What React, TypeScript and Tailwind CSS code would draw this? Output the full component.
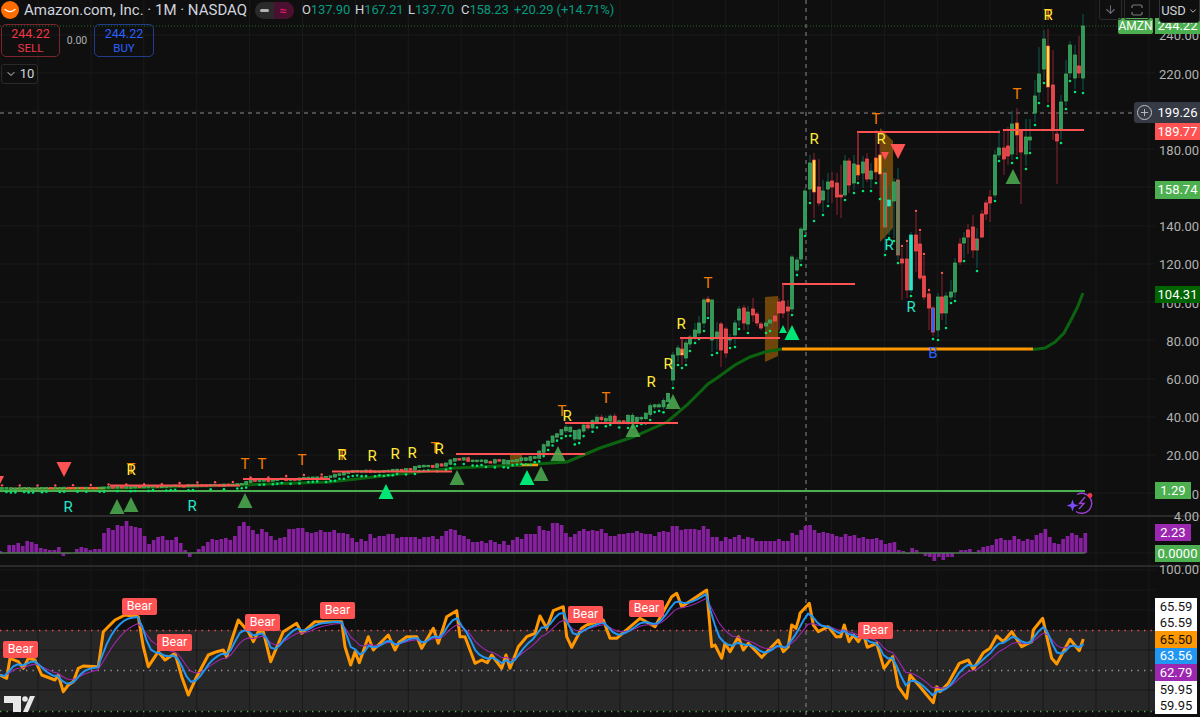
import { ArrowDown, ChevronDown, Plus } from "lucide-react";

type Pt = [number, number];
// x, body top, body bottom, wick high, wick low, kind
type Bar = [number, number, number, number, number, string];

const GRID_X = Array.from({ length: 22 }, (_, i) => 38 + i * 52.9);
const CROSS_X = 806;

const interp = (pts: Pt[], x: number) => {
  if (x <= pts[0][0]) return pts[0][1];
  for (let i = 1; i < pts.length; i++) {
    if (x <= pts[i][0]) {
      const [x0, y0] = pts[i - 1];
      const [x1, y1] = pts[i];
      return y0 + ((y1 - y0) * (x - x0)) / (x1 - x0 || 1);
    }
  }
  return pts[pts.length - 1][1];
};

const toPath = (pts: Pt[]) => pts.map(([x, y], i) => `${i ? "L" : "M"}${x.toFixed(1)} ${y.toFixed(1)}`).join(" ");

// early part of the chart is generated from the price path, the rest is read off per candle
const PRICE_PATH: Pt[] = [
  [0, 488], [110, 487], [240, 484], [250, 480], [330, 477], [345, 471], [400, 469], [440, 465], [452, 458],
  [510, 462], [535, 456], [543, 444], [556, 436], [562, 428], [567, 431], [574, 436], [585, 427], [600, 417],
  [640, 420], [650, 408], [660, 405], [671, 388],
];

const earlyBars = (): Bar[] => {
  let seed = 7;
  const rnd = () => {
    seed = (seed * 16807) % 2147483647;
    return seed / 2147483647;
  };
  const bars: Bar[] = [];
  let prev = 488;
  for (let x = 2; x < 670; x += 4.44) {
    const scale = Math.max(0.5, (495 - interp(PRICE_PATH, x)) / 15);
    const close = interp(PRICE_PATH, x) + (rnd() - 0.5) * scale * 1.5;
    const top = Math.min(prev, close);
    const bot = Math.max(prev, close) + 1.2;
    const kind = close <= prev || rnd() > 0.7 ? "g" : "r";
    bars.push([x, top, bot, top - rnd() * scale * 0.6, bot + rnd() * scale * 0.6, kind]);
    prev = close;
  }
  return bars;
};

const LATE_BARS: Bar[] = [
  [673, 355, 380, 352, 385, "g"], [678, 348, 355, 345, 362, "g"], [682, 349, 355, 338, 365, "y"], [686, 343, 358, 340, 362, "g"],
  [690, 337, 344, 335, 348, "g"], [695, 330, 337, 323, 340, "g"], [699, 323, 333, 316, 336, "g"], [704, 300, 323, 298, 328, "g"],
  [708, 299, 302, 296, 315, "o"], [712, 300, 340, 299, 352, "g"], [717, 332, 338, 322, 350, "g"], [721, 324, 350, 322, 367, "r"],
  [726, 329, 353, 327, 358, "r"], [730, 338, 340, 334, 345, "g"], [735, 323, 335, 320, 344, "g"], [739, 309, 320, 306, 326, "g"],
  [744, 308, 323, 305, 330, "r"], [748, 312, 324, 306, 330, "g"], [753, 309, 315, 298, 322, "r"], [757, 314, 323, 312, 326, "r"],
  [761, 324, 328, 322, 330, "r"], [766, 323, 326, 320, 330, "g"], [770, 320, 323, 317, 328, "g"], [775, 316, 321, 312, 330, "r"],
  [779, 302, 313, 298, 330, "r"], [783, 301, 313, 284, 318, "r"], [788, 307, 311, 300, 335, "r"], [792, 257, 309, 255, 312, "g"],
  [797, 260, 270, 257, 272, "g"], [801, 229, 259, 227, 262, "g"], [805, 191, 230, 188, 233, "g"], [810, 163, 189, 155, 200, "g"],
  [814, 160, 192, 153, 218, "y"], [819, 187, 203, 159, 206, "r"], [823, 191, 200, 180, 212, "g"], [828, 182, 189, 173, 203, "g"],
  [832, 181, 187, 172, 203, "r"], [837, 183, 197, 173, 215, "r"], [841, 195, 197, 165, 218, "r"], [845, 161, 195, 155, 197, "g"],
  [849, 161, 185, 158, 193, "r"], [854, 164, 183, 155, 190, "g"], [858, 165, 175, 132, 180, "o"], [863, 162, 173, 156, 188, "g"],
  [867, 159, 179, 153, 182, "r"], [871, 171, 179, 163, 188, "g"], [876, 158, 172, 130, 180, "o"], [880, 155, 174, 140, 196, "y"],
  [885, 173, 227, 168, 252, "g2"], [889, 200, 206, 186, 235, "c"], [894, 182, 201, 178, 238, "g"], [898, 180, 255, 168, 260, "g2"],
  [902, 259, 263, 248, 300, "r"], [907, 259, 290, 243, 298, "r"], [911, 235, 290, 232, 293, "c"], [916, 235, 251, 213, 272, "r"],
  [920, 244, 278, 232, 280, "r"], [924, 276, 297, 256, 300, "r"], [929, 294, 308, 292, 330, "r"], [933, 308, 332, 306, 336, "b"],
  [938, 297, 330, 293, 337, "g"], [942, 297, 313, 275, 320, "r"], [946, 296, 313, 292, 325, "g"], [951, 292, 297, 280, 300, "g"],
  [955, 263, 292, 258, 298, "g"], [960, 244, 262, 238, 265, "r"], [964, 238, 243, 232, 258, "g"], [968, 230, 237, 224, 254, "r"],
  [973, 227, 250, 215, 258, "r"], [977, 239, 250, 228, 268, "g2"], [982, 214, 237, 210, 238, "r"], [986, 203, 214, 200, 220, "r"],
  [990, 197, 203, 190, 222, "r"], [995, 155, 195, 150, 198, "g"], [999, 148, 155, 130, 158, "g"], [1004, 148, 159, 130, 175, "r"],
  [1008, 146, 156, 127, 165, "r"], [1012, 124, 154, 111, 160, "g"], [1017, 123, 135, 108, 155, "o"], [1021, 131, 152, 129, 204, "r"],
  [1026, 137, 154, 119, 166, "g"], [1030, 137, 140, 119, 150, "g"], [1035, 96, 113, 80, 122, "g"], [1039, 74, 92, 47, 100, "g"],
  [1044, 39, 69, 30, 80, "g"], [1048, 46, 87, 29, 103, "y"], [1053, 85, 129, 50, 140, "r"], [1057, 134, 141, 113, 184, "r"],
  [1061, 102, 129, 95, 140, "g"], [1066, 74, 101, 60, 106, "g"], [1070, 45, 73, 41, 78, "g"], [1075, 55, 78, 45, 89, "g"],
  [1079, 66, 73, 36, 78, "r"], [1083, 26, 78, 14, 90, "g"],
];

const BAR_STYLE: Record<string, { fill: string; stroke: string; wick: string }> = {
  g: { fill: "#2a9a68", stroke: "#4caf50", wick: "#0d5c50" },
  g2: { fill: "#2a9a68", stroke: "#ff5252", wick: "#0d5c50" },
  r: { fill: "#e8434b", stroke: "#ff5252", wick: "#8c2230" },
  y: { fill: "#ffeb3b", stroke: "#ff5252", wick: "#8c2230" },
  o: { fill: "#ff9800", stroke: "#ff5252", wick: "#8c2230" },
  c: { fill: "#26e7c7", stroke: "#26e7c7", wick: "#0d5c50" },
  b: { fill: "#2962ff", stroke: "#ff5252", wick: "#8c2230" },
};

const EMA_LINE: Pt[] = [
  [0, 490], [120, 488], [240, 485], [330, 482], [400, 474], [455, 468], [520, 465], [567, 462], [600, 448], [633, 437],
  [667, 422], [687, 405], [708, 384], [717, 378], [735, 365], [750, 357], [765, 352], [782, 349],
];
const EMA_END: Pt[] = [[1033, 349.5], [1045, 348], [1055, 342], [1064, 333], [1072, 318], [1078, 306], [1083, 293]];

const RED_LINES: number[][] = [
  [110, 240, 485.5], [243, 330, 479], [332, 452, 471.5], [456, 585, 454], [565, 678, 423],
  [680, 780, 338], [782, 855, 284], [857, 1000, 132], [1003, 1084, 130],
];
const RED_DROPS: number[][] = [[682, 338, 353], [783, 284, 300], [858, 132, 165]];

const TRI_UP: [number, number, number, string][] = [
  [117, 499, 15, "#4caf50"], [131, 497, 15, "#4caf50"], [245, 493, 15, "#4caf50"], [386, 484, 15, "#00e676"],
  [457, 470, 15, "#4caf50"], [541, 466, 15, "#4caf50"], [558, 446, 15, "#4caf50"], [527, 470, 15, "#00e676"],
  [633, 422, 15, "#4caf50"], [673, 394, 15, "#4caf50"], [792, 325, 15, "#00e676"], [783, 325, 8, "#00e676"], [1013, 169, 15, "#4caf50"],
];
const TRI_DOWN: [number, number, number][] = [[64, 462, 15], [898, 144, 15], [885, 152, 8], [0, 476, 8]];

const LETTERS: [string, number, number, string][] = [
  ["T", 131, 468, "#f57c00"], ["R", 131, 469, "#ffeb3b"], ["R", 68, 506, "#26e7c7"], ["R", 192, 505, "#26e7c7"],
  ["T", 245, 463, "#f57c00"], ["T", 262, 463, "#f57c00"], ["T", 302, 459, "#f57c00"], ["T", 342, 454, "#f57c00"],
  ["R", 342, 454, "#ffeb3b"], ["R", 372, 455, "#ffeb3b"], ["R", 395, 453, "#ffeb3b"], ["R", 412, 452, "#ffeb3b"],
  ["T", 435, 447, "#f57c00"], ["R", 439, 448, "#ffeb3b"], ["T", 562, 410, "#f57c00"], ["R", 567, 415, "#ffeb3b"],
  ["T", 606, 397, "#f57c00"], ["R", 651, 381, "#ffeb3b"], ["R", 668, 363, "#ffeb3b"], ["R", 681, 323, "#ffeb3b"],
  ["T", 708, 282, "#f57c00"], ["R", 814, 138, "#ffeb3b"], ["T", 876, 118, "#f57c00"], ["R", 881, 138, "#ffeb3b"],
  ["R", 889, 244, "#26e7c7"], ["R", 911, 306, "#26e7c7"], ["B", 933, 352, "#2962ff"], ["T", 1017, 93, "#f57c00"],
  ["T", 1048, 14, "#f57c00"], ["R", 1048, 14, "#ffeb3b"],
];

const HIST_A = [2,0,8,8,10,7,12,11,9,5,4,3,3,6,-3,-1,0,4,6,5,3,4,4,20,25,23,28,27,32,27,26,25,17,9,13,16,17,13,13,16,10,3,-4,0,4,7,11,14,13,14,15,13,17,27,31,27,23,19,24,21,17,13,15,16,24,24,25,25,21,20,21,23,21,21,23,20,20,19,15,11,14,12,19,15,17,17,19,19,15];
const HIST_B = [16,16,16,16,14,16,16,17,14,17,22,24,23,18,17,14,11,11,12,10,13,11,9,12,8,13,16,14,19,19,19,27,23,22,30,30,28,20,16,19,22,24,22,23,22,24,20,17,17,19,19,20,20,22,20,19,19,17,21,22,21,27,27,23,24,24,24,23,27,24,16,16,12,16,14,16,18,14,16,15,12,12,12,12,12,14,12,12,20,18];
const HIST_C = [23,27,28,23,20,21,20,19,17,16,19,17,18,15,16,14,14,15,13,9,10,11,3,2,-1,5,3,0,-3,-4,-8,-4,-7,-4,-4,0,3,3,4,1,3,6,7,8,14,15,13,13,17,14,12,14,13,18,20,24,16,10,9,14,17,20,18,15,20];

const HIST: Pt[] = [
  ...HIST_A.map((h, i): Pt => [(i * 401.7) / HIST_A.length, h]),
  ...HIST_B.map((h, i): Pt => [401.7 + (i * 399.3) / HIST_B.length, h]),
  ...HIST_C.map((h, i): Pt => [801 + i * 4.44, h]),
];

// orange line, read off the zoomed picture in three runs
const RSI_A: Pt[] = [[0,705],[20,715],[30,655],[55,665],[70,685],[85,655],[105,660],[125,705],[165,720],[175,705],[190,755],[205,735],[220,725],[235,685],[250,678],[295,680],[310,575],[345,540],[375,525],[415,530],[430,620],[445,680],[475,635],[495,660],[525,640],[545,710],[565,765],[590,710],[625,645],[650,635],[670,630],[680,650],[695,600],[715,540],[745,575],[760,605],[775,575],[790,575],[812,665],[850,575],[890,550],[905,580],[945,545],[1025,545],[1035,620],[1052,675],[1065,635],[1078,668],[1105,590],[1120,630],[1165,585],[1185,630],[1198,605]];
const RSI_B: Pt[] = [[0,785],[20,770],[50,770],[65,805],[100,745],[115,790],[140,710],[170,692],[180,770],[195,770],[225,850],[245,840],[262,848],[275,825],[305,865],[318,825],[330,865],[355,800],[380,770],[405,760],[420,708],[440,745],[460,692],[490,680],[500,770],[515,802],[545,745],[560,735],[610,720],[630,775],[650,775],[720,715],[765,740],[790,695],[815,650],[830,640],[845,680],[920,630],[935,800],[945,795],[965,835],[975,790],[990,815],[1015,770],[1030,810],[1045,790],[1085,832],[1135,780],[1150,815],[1165,800],[1175,735],[1188,745],[1198,712]];
const RSI_C: Pt[] = [[0,310],[28,280],[40,345],[55,365],[85,350],[108,380],[122,380],[133,345],[147,395],[160,375],[175,395],[190,370],[202,412],[230,400],[252,475],[278,440],[295,530],[320,565],[330,495],[360,530],[400,578],[410,530],[420,545],[445,520],[478,460],[505,450],[520,478],[550,428],[570,415],[590,378],[610,395],[635,365],[665,410],[695,395],[700,360],[728,325],[755,445],[770,462],[810,388],[838,422],[850,387]];

const RSI: Pt[] = [
  ...RSI_A.map(([x, y]): Pt => [x / 3, 440 + y / 3]),
  ...RSI_B.map(([x, y]): Pt => [400 + x / 3, 380 + y / 3]),
  ...RSI_C.map(([x, y]): Pt => [800 + x / 3, 510 + y / 3]),
];

const ema = (k: number): Pt[] => {
  const out: Pt[] = [];
  let v = interp(RSI, 0);
  for (let x = 0; x <= 1084; x += 4.44) {
    v += (interp(RSI, x) - v) * k;
    out.push([x, v]);
  }
  return out;
};

const BEARS: [number, number][] = [[3, 641], [122, 598], [157, 634], [245, 614], [320, 602], [568, 606], [629, 600], [858, 622]];

const PRICE_TICKS = ["240.00", "220.00", "200.00", "180.00", "160.00", "140.00", "120.00", "100.00", "80.00", "60.00", "40.00", "20.00", "0"];

const Grid = ({ top, bottom, rows }: { top: number; bottom: number; rows: number[] }) => (
  <g stroke="#1a1a1a" strokeWidth="1">
    {GRID_X.map((x) => (
      <line key={x} x1={x} x2={x} y1={top} y2={bottom} />
    ))}
    {rows.map((y) => (
      <line key={y} x1={0} x2={1155} y1={y} y2={y} />
    ))}
  </g>
);

const Crosshair = ({ top, bottom }: { top: number; bottom: number }) => (
  <line x1={CROSS_X} x2={CROSS_X} y1={top} y2={bottom} stroke="#8a8a8a" strokeDasharray="4 4" />
);

const Candles = () => {
  const bars = [...earlyBars(), ...LATE_BARS];
  return (
    <g>
      {bars.map(([x, top, bot, hi, lo, kind], i) => {
        const s = BAR_STYLE[kind];
        const late = x > 895 && x < 960 && kind === "r";
        return (
          <g key={i}>
            <line x1={x} x2={x} y1={hi} y2={lo} stroke={s.wick} />
            <rect x={x - 1.5} y={top} width={3} height={Math.max(bot - top, 1.5)} fill={s.fill} stroke={s.stroke} strokeWidth="0.7" />
            {late || (x < 330 && i % 4 === 0) ? (
              <circle cx={x} cy={hi - 2} r="1.2" fill="#ff5252" />
            ) : (
              kind !== "r" && <circle cx={x} cy={lo + 3} r="1.3" fill="#00e676" />
            )}
          </g>
        );
      })}
    </g>
  );
};

const MainChart = () => (
  <svg viewBox="0 0 1155 515" className="block w-[1155px] h-[515px]">
    <Grid top={0} bottom={515} rows={[35, 73, 111, 149, 187, 226, 264, 302, 340, 379, 417, 455, 493]} />
    <line x1={0} x2={1155} y1={26} y2={26} stroke="#1f6a2c" strokeDasharray="1 2" />
    <Crosshair top={0} bottom={515} />
    <line x1={0} x2={1134} y1={113} y2={113} stroke="#8a8a8a" strokeDasharray="4 4" />

    <path d="M765 297L778 296L778 356L765 362Z" fill="#ff9800" fillOpacity="0.4" />
    <path d="M880 128L893 141L893 228L880 242Z" fill="#ff9800" fillOpacity="0.4" />
    <path d="M510 455L522 455L522 467L510 467Z" fill="#ff9800" fillOpacity="0.4" />

    <path d={toPath(EMA_LINE)} fill="none" stroke="#0b630f" strokeWidth="3" />
    <path d={toPath(EMA_END)} fill="none" stroke="#0b630f" strokeWidth="3" />
    <line x1={0} x2={1085} y1={491} y2={491} stroke="#4caf50" strokeWidth="2" />
    <line x1={10} x2={105} y1={488.5} y2={488.5} stroke="#ff9800" strokeWidth="1.5" />
    <line x1={68} x2={103} y1={488} y2={488} stroke="#ff9800" strokeWidth="1.5" />
    <line x1={522} x2={538} y1={465} y2={465} stroke="#ff9800" strokeWidth="2.5" />
    <line x1={782} x2={1033} y1={349} y2={349} stroke="#ff9800" strokeWidth="3" />

    <Candles />

    {RED_LINES.map(([a, b, y]) => (
      <line key={a} x1={a} x2={b} y1={y} y2={y} stroke="#ff5252" strokeWidth="2" />
    ))}
    {RED_DROPS.map(([x, a, b]) => (
      <line key={x} x1={x} x2={x} y1={a} y2={b} stroke="#b3303c" />
    ))}
    {TRI_UP.map(([x, y, w, c]) => (
      <path key={`${x}-${y}`} d={`M${x} ${y}L${x + w / 2} ${y + w}L${x - w / 2} ${y + w}Z`} fill={c} fillOpacity={c === "#4caf50" ? 0.85 : 1} />
    ))}
    {TRI_DOWN.map(([x, y, w]) => (
      <path key={`${x}-${y}`} d={`M${x - w / 2} ${y}L${x + w / 2} ${y}L${x} ${y + w}Z`} fill="#ff5252" />
    ))}
    {LETTERS.map(([t, x, y, c], i) => (
      <text key={i} x={x} y={y + 5.5} textAnchor="middle" fill={c} fontSize="15" fontFamily="Roboto, sans-serif">
        {t}
      </text>
    ))}

    {/* spark + bolt badge at the end of the series */}
    <g fill="none" stroke="#9c3fd0" strokeWidth="1.4">
      <path d="M1077 494.5A10 10 0 1 1 1076 511.5" />
      <path d="M1085 497L1079.5 503.5L1084 503.5L1079 509" />
    </g>
    <path d="M1072.5 499.5L1074 504L1078.5 505.5L1074 507L1072.5 511.5L1071 507L1066.5 505.5L1071 504Z" fill="#7c4dff" />
    <circle cx="1090" cy="495.5" r="2.4" fill="#f23645" />
  </svg>
);

const VolumeChart = () => (
  <svg viewBox="0 517 1155 48" className="block w-[1155px] h-[48px]">
    <Grid top={517} bottom={565} rows={[553]} />
    <Crosshair top={517} bottom={565} />
    {HIST.map(([x, h]) => (
      <rect key={x} x={x - 1.7} y={h > 0 ? 553 - h : 553} width={3.7} height={Math.abs(h)} fill="#86209f" />
    ))}
    <line x1={0} x2={1085} y1={553} y2={553} stroke="#4d7a50" strokeWidth="1.4" />
  </svg>
);

const RsiChart = () => (
  <svg viewBox="0 567 1155 150" className="block w-[1155px] h-[150px]">
    <rect x={0} y={630} width={1155} height={81} fill="#272727" />
    <Grid top={567} bottom={717} rows={[570, 590, 610, 650, 690]} />
    <Crosshair top={567} bottom={717} />
    <line x1={0} x2={1155} y1={630.5} y2={630.5} stroke="#ff5252" strokeWidth="1.3" strokeDasharray="1.3 5.2" />
    <line x1={0} x2={1155} y1={670.5} y2={670.5} stroke="#9a9a9a" strokeWidth="1.3" strokeDasharray="1.3 5.2" />
    <line x1={0} x2={1155} y1={711.5} y2={711.5} stroke="#4caf50" strokeWidth="1.3" strokeDasharray="1.3 5.2" />
    <path d={toPath(RSI)} fill="none" stroke="#ff9800" strokeWidth="3" strokeLinejoin="round" />
    <path d={toPath(ema(0.22))} fill="none" stroke="#9c27b0" strokeWidth="1.1" />
    <path d={toPath(ema(0.42))} fill="none" stroke="#2196f3" strokeWidth="2" />
    {/* TradingView mark */}
    <path d="M4 696H21V712H13V703H4Z M23 712L30 696H35L28 712Z" fill="#e8e8e8" />
    <circle cx="25" cy="699" r="2.8" fill="#e8e8e8" />
  </svg>
);

const Tag = ({ top, height, right, bg, children }: { top: number; height: number; right?: boolean; bg: string; children: string }) => (
  <div
    className={`absolute left-0 flex items-center justify-center text-[13px] text-white ${right ? "w-[36px]" : "w-[45px]"}`}
    style={{ top, height, background: bg }}
  >
    {children}
  </div>
);

const RSI_TAGS: [string, string, string][] = [
  ["65.59", "#ffffff", "#131313"],
  ["65.59", "#ffffff", "#131313"],
  ["65.50", "#ff9800", "#131313"],
  ["63.56", "#2196f3", "#ffffff"],
  ["62.79", "#9c27b0", "#ffffff"],
  ["59.95", "#ffffff", "#131313"],
  ["59.95", "#ffffff", "#131313"],
];

const PriceAxis = () => (
  <div className="relative flex w-[45px] flex-col overflow-hidden text-[13px] text-[#b2b2b2]">
    <div className="flex h-[515px] flex-col items-end pt-[17px] pr-[1px]">
      {PRICE_TICKS.map((t) => (
        <div key={t} className="flex h-[38.2px] shrink-0 items-center">
          {t}
        </div>
      ))}
    </div>
    <div className="h-[2px] bg-[#2a2a2a]" />
    <div className="flex h-[48px] flex-col items-end pr-[1px]">
      <div className="-mt-[8px] leading-[16px]">4.00</div>
    </div>
    <div className="h-[2px] bg-[#2a2a2a]" />
    <div className="flex h-[150px] flex-col items-end pr-[1px]">
      <div className="mt-[-5px] leading-[16px]">100.00</div>
    </div>

    <Tag top={17.5} height={16.5} bg="#4caf50">244.22</Tag>
    <Tag top={102} height={21} bg="#363a45">199.26</Tag>
    <Tag top={123} height={16.5} bg="#ff5252">189.77</Tag>
    <Tag top={181} height={18} bg="#4caf50">158.74</Tag>
    <Tag top={286} height={17} bg="#006400">104.31</Tag>
    <Tag top={482} height={17} right bg="#4caf50">1.29</Tag>
    <Tag top={524} height={17} right bg="#9c27b0">2.23</Tag>
    <Tag top={545} height={16.5} bg="#4caf50">0.0000</Tag>

    <div className="absolute left-0 top-[598px] flex w-[42px] flex-col bg-white">
      {RSI_TAGS.map(([v, bg, fg], i) => (
        <div key={i} className="flex h-[16.6px] items-center justify-center text-[13px]" style={{ background: bg, color: fg }}>
          {v}
        </div>
      ))}
    </div>
  </div>
);

const Stat = ({ k, v }: { k: string; v: string }) => (
  <span className="w-[53px] shrink-0">
    <span className="text-[#d1d4dc]">{k}</span>
    <span className="text-[#089981]">{v}</span>
  </span>
);

const Legend = () => (
  <div className="absolute left-[1px] top-0 flex flex-col">
    <div className="flex h-[20px] items-center">
      <svg viewBox="0 0 18 18" className="h-[18px] w-[18px]">
        <circle cx="9" cy="9" r="9" fill="#ff6d00" />
        <path d="M4 8.5C7 11 11 11 14 8.5" fill="none" stroke="#fff" strokeWidth="1.3" strokeLinecap="round" />
      </svg>
      <span className="ml-[5px] w-[224px] whitespace-nowrap text-[15px] text-[#d1d4dc]">Amazon.com, Inc. · 1M · NASDAQ</span>
      <div className="ml-[7px] flex h-[17px] w-[39px] overflow-hidden rounded-full bg-[#2a2a2a]">
        <div className="flex w-[19px] items-center justify-center">
          <div className="h-[3px] w-[9px] rounded-sm bg-[#b2b2b2]" />
        </div>
        <div className="flex flex-1 items-center justify-center bg-[#4a1030] pr-[2px] text-[13px] leading-none text-[#e91e63]">≈</div>
      </div>
      <div className="ml-[8px] flex whitespace-nowrap text-[13px] tracking-[-0.1px]">
        <Stat k="O" v="137.90" />
        <Stat k="H" v="167.21" />
        <Stat k="L" v="137.70" />
        <Stat k="C" v="158.23" />
        <span className="text-[#089981]">+20.29 (+14.71%)</span>
      </div>
    </div>
    <div className="mt-[4px] flex items-center">
      <div className="flex h-[33px] w-[59px] flex-col items-center justify-center rounded-[5px] border border-[#7a2530] text-[12.5px] leading-[14px] text-[#f23645]">
        <span>244.22</span>
        <span className="text-[11.5px]">SELL</span>
      </div>
      <div className="w-[34px] text-center text-[10.5px] text-[#b2b2b2]">0.00</div>
      <div className="flex h-[33px] w-[60px] flex-col items-center justify-center rounded-[5px] border border-[#1f3d8c] text-[12.5px] leading-[14px] text-[#2962ff]">
        <span>244.22</span>
        <span className="text-[11.5px]">BUY</span>
      </div>
    </div>
    <div className="mt-[7px] flex h-[20px] w-[37px] items-center justify-center gap-[3px] rounded-[3px] border border-[#2a2a2a] text-[13px] text-[#d1d4dc]">
      <ChevronDown size={12} />
      <span>10</span>
    </div>
  </div>
);

const TopRight = () => (
  <div className="absolute right-0 top-0 flex items-start text-[#6a6d78]">
    <div className="flex h-[20px] w-[23px] items-center justify-center rounded-b-[3px] border border-t-0 border-[#2a2a2a]">
      <ArrowDown size={13} />
    </div>
    <div className="ml-[2px] flex h-[20px] w-[26px] items-center justify-center rounded-b-[3px] border border-t-0 border-[#2a2a2a]">
      <svg viewBox="0 0 12 12" className="h-[12px] w-[12px]" fill="none" stroke="#7a7d88" strokeWidth="1.2">
        <path d="M1 4V2.5Q1 1 2.5 1H9.5Q11 1 11 2.5V4M1 8V9.5Q1 11 2.5 11H9.5Q11 11 11 9.5V8" />
      </svg>
    </div>
    <div className="ml-[9px] flex h-[23px] w-[41px] items-center justify-center gap-[2px] rounded-b-[4px] border border-t-0 border-[#333333] bg-[#0f0f0f] text-[13px] text-[#d1d4dc]">
      USD
      <ChevronDown size={10} />
    </div>
  </div>
);

export default function App() {
  return (
    <div className="relative flex h-[717px] w-[1200px] overflow-hidden bg-[#0f0f0f] font-['Roboto',sans-serif]">
      <div className="relative flex w-[1155px] flex-col">
        <MainChart />
        <div className="h-[2px] bg-[#2a2a2a]" />
        <VolumeChart />
        <div className="h-[2px] bg-[#2a2a2a]" />
        <RsiChart />

        {BEARS.map(([x, y]) => (
          <div
            key={x}
            className="absolute flex h-[17px] w-[35px] items-center justify-center rounded-[2px] bg-[#ff5252] text-[12.5px] text-white"
            style={{ left: x, top: y }}
          >
            Bear
          </div>
        ))}

        {/* symbol tag next to the last price, and the crosshair's add button */}
        <div className="absolute right-[2px] top-[18px] flex h-[16px] w-[35px] items-center justify-center rounded-[2px] bg-[#4caf50] text-[12px] text-white">AMZN</div>
        <div className="absolute right-0 top-[102px] flex h-[21px] w-[21px] items-center justify-center rounded-l-[3px] bg-[#363a45]">
          <div className="flex h-[15px] w-[15px] items-center justify-center rounded-full border border-[#c0c0c0] text-[#c0c0c0]">
            <Plus size={11} />
          </div>
        </div>
        <Legend />
      </div>
      <PriceAxis />
      <TopRight />
    </div>
  );
}
